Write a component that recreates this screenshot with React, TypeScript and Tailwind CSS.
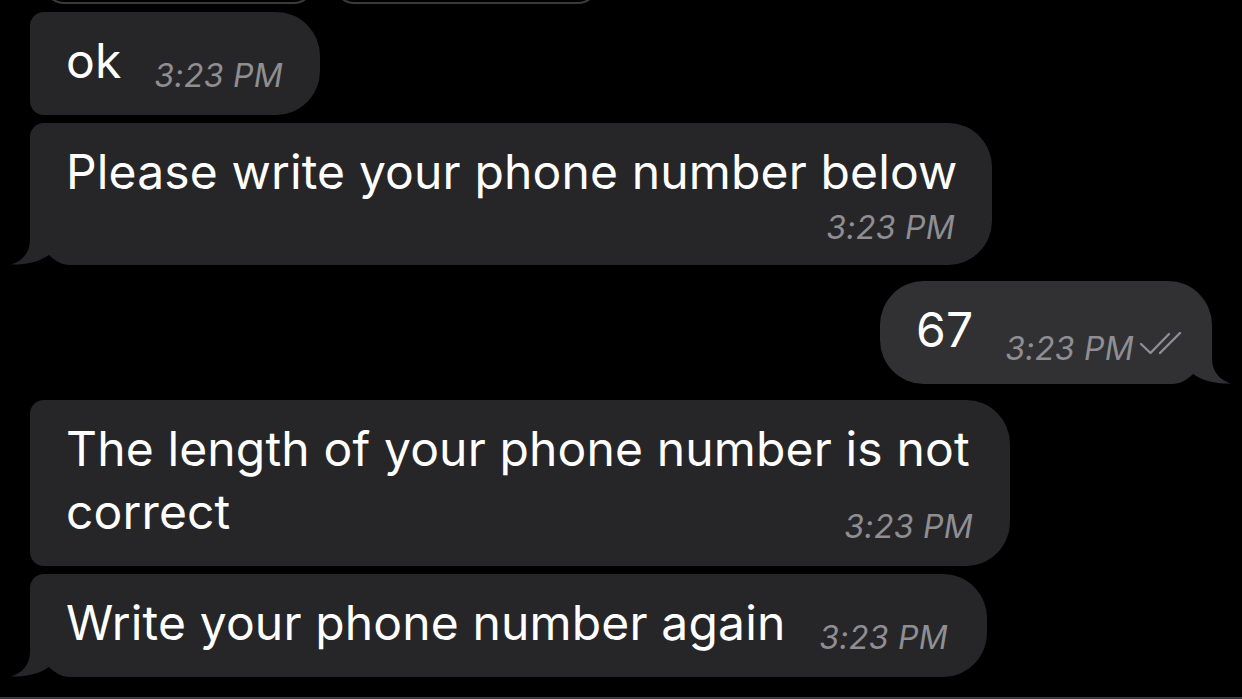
import React from "react";

const bubbleColor = "#262628";
const outColor = "#313133";

const Tail = ({ side, color }: { side: "left" | "right"; color: string }) => (
    <svg
        width="60"
        height="31"
        viewBox="0 0 60 31"
        className={side === "left" ? "absolute bottom-0 left-[-20px]" : "absolute bottom-0 right-[-20px] -scale-x-100"}
    >
        {/* black notch under the tail, then the tail itself */}
        <rect x="20" y="0" width="40" height="31" fill="#000" />
        <path
            d="M20 0 L60 0 L60 31 C52 31 45 27 39 21 C29 28 15 31 1 30.5 C12 27 20 19 20 6 Z"
            fill={color}
        />
    </svg>
);

const Time = ({ className = "" }: { className?: string }) => (
    <span className={`text-[32px] leading-[32px] italic text-[#8e8e93] whitespace-nowrap tracking-[0.3px] ${className}`}>3:23 PM</span>
);

const ReadChecks = () => (
    <svg width="44" height="24" viewBox="0 0 44 24" className="mb-[9px]" fill="none" stroke="#8e8e93" strokeWidth="2.4" strokeLinecap="round" strokeLinejoin="round">
        <path d="M2 12 L11.5 21 L30 2" />
        <path d="M21 21 L41 1" />
    </svg>
);

const msgText = "text-[48px] leading-[63px] text-white whitespace-nowrap tracking-[0.15px]";

export default function App() {
    return (
        <div className="w-[1242px] h-[699px] overflow-hidden bg-black flex flex-col font-['Inter','Liberation_Sans',sans-serif]">
            {/* bottom edge of the inline buttons above */}
            <div className="h-[4px] overflow-hidden flex items-end gap-[20px] pl-[44px] shrink-0">
                <div className="h-[40px] w-[270px] shrink-0 rounded-[30px] border-2 border-[#3a3a3c]" />
                <div className="h-[40px] w-[264px] shrink-0 rounded-[30px] border-2 border-[#3a3a3c]" />
            </div>

            <div className="flex flex-col mt-[8px]">
                <div className="ml-[30px] w-[290px] h-[103px] bg-[#262628] rounded-l-[14px] rounded-r-[44px] pl-[36px] pr-[37px] pt-[17px]">
                    <div className="flex items-end justify-between">
                        <span className={msgText}>ok</span>
                        <Time />
                    </div>
                </div>

                <div className="relative mt-[8px] ml-[30px] w-[962px] h-[142px] bg-[#262628] rounded-tl-[14px] rounded-bl-none rounded-r-[44px] pl-[36px] pr-[37px] pt-[17px] flex flex-col">
                    <span className={msgText}>Please write your phone number below</span>
                    <div className="mt-[9px] flex justify-end">
                        <Time />
                    </div>
                    <Tail side="left" color={bubbleColor} />
                </div>

                <div className="relative mt-[16px] ml-auto mr-[30px] w-[332px] h-[103px] bg-[#313133] rounded-l-[44px] rounded-tr-[44px] rounded-br-none pl-[36px] pr-[29px] pt-[17px]">
                    <div className="flex items-end justify-between">
                        <span className={msgText}>67</span>
                        <div className="flex items-end gap-[5px] mb-[-4px]">
                            <Time />
                            <ReadChecks />
                        </div>
                    </div>
                    <Tail side="right" color={outColor} />
                </div>

                <div className="mt-[16px] ml-[30px] w-[980px] h-[166px] bg-[#262628] rounded-l-[14px] rounded-r-[44px] pl-[36px] pr-[37px] pt-[17px] flex flex-col">
                    <span className={msgText}>The length of your phone number is not</span>
                    <div className="flex items-end justify-between">
                        <span className={msgText}>correct</span>
                        <Time />
                    </div>
                </div>

                <div className="relative mt-[8px] ml-[30px] w-[957px] h-[103px] bg-[#262628] rounded-tl-[14px] rounded-bl-none rounded-r-[44px] pl-[36px] pr-[39px] pt-[17px]">
                    <div className="flex items-end justify-between">
                        <span className={msgText}>Write your phone number again</span>
                        <Time />
                    </div>
                    <Tail side="left" color={bubbleColor} />
                </div>
            </div>

            <div className="mt-auto h-[2px] bg-[#3a3a3c] shrink-0" />
        </div>
    );
}
